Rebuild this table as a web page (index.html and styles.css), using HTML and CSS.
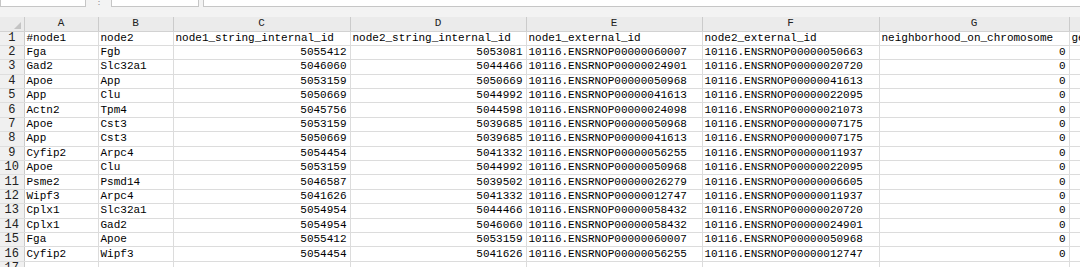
FILE: index.html
```html
<!DOCTYPE html>
<html>
<head>
<meta charset="utf-8">
<link rel="stylesheet" href="styles.css">
</head>
<body>
<div class="toolbar">
  <div class="namebox">E16</div>
  <div class="dots">⋮</div>
  <div class="fxbox"><span>✕</span><span>✓</span><span>fx</span></div>
  <div class="formula"></div>
</div>
<table class="sheet">
  <colgroup>
    <col class="c-rn"><col class="c-a"><col class="c-b"><col class="c-c"><col class="c-d"><col class="c-e"><col class="c-f"><col class="c-g"><col class="c-h">
  </colgroup>
  <thead>
    <tr><th class="corner"><span class="tri"></span></th><th>A</th><th>B</th><th>C</th><th>D</th><th>E</th><th>F</th><th>G</th><th></th></tr>
  </thead>
  <tbody>
    <tr><th>1</th><td>#node1</td><td>node2</td><td>node1_string_internal_id</td><td>node2_string_internal_id</td><td>node1_external_id</td><td>node2_external_id</td><td>neighborhood_on_chromosome</td><td>gene_fusion</td></tr>
    <tr><th>2</th><td>Fga</td><td>Fgb</td><td class="n">5055412</td><td class="n">5053081</td><td>10116.ENSRNOP00000060007</td><td>10116.ENSRNOP00000050663</td><td class="n">0</td><td></td></tr>
    <tr><th>3</th><td>Gad2</td><td>Slc32a1</td><td class="n">5046060</td><td class="n">5044466</td><td>10116.ENSRNOP00000024901</td><td>10116.ENSRNOP00000020720</td><td class="n">0</td><td></td></tr>
    <tr><th>4</th><td>Apoe</td><td>App</td><td class="n">5053159</td><td class="n">5050669</td><td>10116.ENSRNOP00000050968</td><td>10116.ENSRNOP00000041613</td><td class="n">0</td><td></td></tr>
    <tr><th>5</th><td>App</td><td>Clu</td><td class="n">5050669</td><td class="n">5044992</td><td>10116.ENSRNOP00000041613</td><td>10116.ENSRNOP00000022095</td><td class="n">0</td><td></td></tr>
    <tr><th>6</th><td>Actn2</td><td>Tpm4</td><td class="n">5045756</td><td class="n">5044598</td><td>10116.ENSRNOP00000024098</td><td>10116.ENSRNOP00000021073</td><td class="n">0</td><td></td></tr>
    <tr><th>7</th><td>Apoe</td><td>Cst3</td><td class="n">5053159</td><td class="n">5039685</td><td>10116.ENSRNOP00000050968</td><td>10116.ENSRNOP00000007175</td><td class="n">0</td><td></td></tr>
    <tr><th>8</th><td>App</td><td>Cst3</td><td class="n">5050669</td><td class="n">5039685</td><td>10116.ENSRNOP00000041613</td><td>10116.ENSRNOP00000007175</td><td class="n">0</td><td></td></tr>
    <tr><th>9</th><td>Cyfip2</td><td>Arpc4</td><td class="n">5054454</td><td class="n">5041332</td><td>10116.ENSRNOP00000056255</td><td>10116.ENSRNOP00000011937</td><td class="n">0</td><td></td></tr>
    <tr><th>10</th><td>Apoe</td><td>Clu</td><td class="n">5053159</td><td class="n">5044992</td><td>10116.ENSRNOP00000050968</td><td>10116.ENSRNOP00000022095</td><td class="n">0</td><td></td></tr>
    <tr><th>11</th><td>Psme2</td><td>Psmd14</td><td class="n">5046587</td><td class="n">5039502</td><td>10116.ENSRNOP00000026279</td><td>10116.ENSRNOP00000006605</td><td class="n">0</td><td></td></tr>
    <tr><th>12</th><td>Wipf3</td><td>Arpc4</td><td class="n">5041626</td><td class="n">5041332</td><td>10116.ENSRNOP00000012747</td><td>10116.ENSRNOP00000011937</td><td class="n">0</td><td></td></tr>
    <tr><th>13</th><td>Cplx1</td><td>Slc32a1</td><td class="n">5054954</td><td class="n">5044466</td><td>10116.ENSRNOP00000058432</td><td>10116.ENSRNOP00000020720</td><td class="n">0</td><td></td></tr>
    <tr><th>14</th><td>Cplx1</td><td>Gad2</td><td class="n">5054954</td><td class="n">5046060</td><td>10116.ENSRNOP00000058432</td><td>10116.ENSRNOP00000024901</td><td class="n">0</td><td></td></tr>
    <tr><th>15</th><td>Fga</td><td>Apoe</td><td class="n">5055412</td><td class="n">5053159</td><td>10116.ENSRNOP00000060007</td><td>10116.ENSRNOP00000050968</td><td class="n">0</td><td></td></tr>
    <tr><th>16</th><td>Cyfip2</td><td>Wipf3</td><td class="n">5054454</td><td class="n">5041626</td><td>10116.ENSRNOP00000056255</td><td>10116.ENSRNOP00000012747</td><td class="n">0</td><td></td></tr>
    <tr><th>17</th><td></td><td></td><td></td><td></td><td></td><td></td><td></td><td></td></tr>
  </tbody>
</table>
</body>
</html>
```
FILE: styles.css
```css
html, body {
  margin: 0;
  padding: 0;
  background: #ffffff;
  overflow: hidden;
  width: 1080px;
  height: 267px;
}
body {
  font-family: "Liberation Mono", "DejaVu Sans Mono", monospace;
  font-size: 11px;
  color: #000;
}
.toolbar {
  height: 17px;
  background: #f3f3f3;
  display: flex;
  align-items: flex-end;
  overflow: hidden;
}
.namebox, .fxbox, .formula {
  height: 24px;
  margin-bottom: 10px;
  background: #fff;
  border: 1px solid #c6c6c6;
  box-sizing: border-box;
  flex: none;
}
.namebox {
  width: 86px;
  padding: 3px 6px;
  color: #555;
  font-family: "Liberation Sans", sans-serif;
  font-size: 12px;
  line-height: 14px;
}
.dots {
  width: 25px;
  text-align: center;
  color: #999;
  font-size: 10px;
  line-height: 10px;
  margin-bottom: 10px;
  align-self: flex-end;
  height: 6px;
  overflow: hidden;
}
.fxbox {
  width: 88px;
  display: flex;
  gap: 18px;
  padding: 4px 14px;
  color: #aaa;
  font-family: "Liberation Serif", serif;
  font-size: 12px;
  line-height: 14px;
}
.formula {
  margin-left: 4px;
  flex: 1;
  border-right: none;
}
.sheet {
  border-collapse: collapse;
  table-layout: fixed;
  width: 1189px;
}
.c-rn { width: 24px; }
.c-a { width: 74px; }
.c-b { width: 75px; }
.c-c { width: 177px; }
.c-d { width: 176px; }
.c-e { width: 176px; }
.c-f { width: 177px; }
.c-g { width: 190px; }
.c-h { width: 120px; }
.sheet th, .sheet td {
  height: 14.4px;
  padding: 0 2px;
  box-sizing: border-box;
  white-space: nowrap;
  overflow: hidden;
  line-height: 13px;
  vertical-align: middle;
}
.sheet td {
  border: 1px solid #dcdcdc;
  text-align: left;
}
.sheet td.n {
  text-align: right;
  padding-right: 3px;
}
.sheet thead th {
  height: 14px;
  background: #ebebeb;
  font-weight: normal;
  color: #222;
  text-align: center;
  border-right: 1px solid #cbcbcb;
  border-bottom: 1px solid #d2d2d2;
}
.sheet tbody th {
  background: #f0f0f0;
  font-weight: normal;
  font-size: 12px;
  color: #222;
  text-align: center;
  padding: 0;
  border-right: 1px solid #cbcbcb;
  border-bottom: 1px solid #dedede;
}
.corner {
  position: relative;
}
.tri {
  position: absolute;
  right: 3px;
  bottom: 2px;
  width: 0;
  height: 0;
  border-left: 7px solid transparent;
  border-bottom: 7px solid #c4c4c4;
}
```
